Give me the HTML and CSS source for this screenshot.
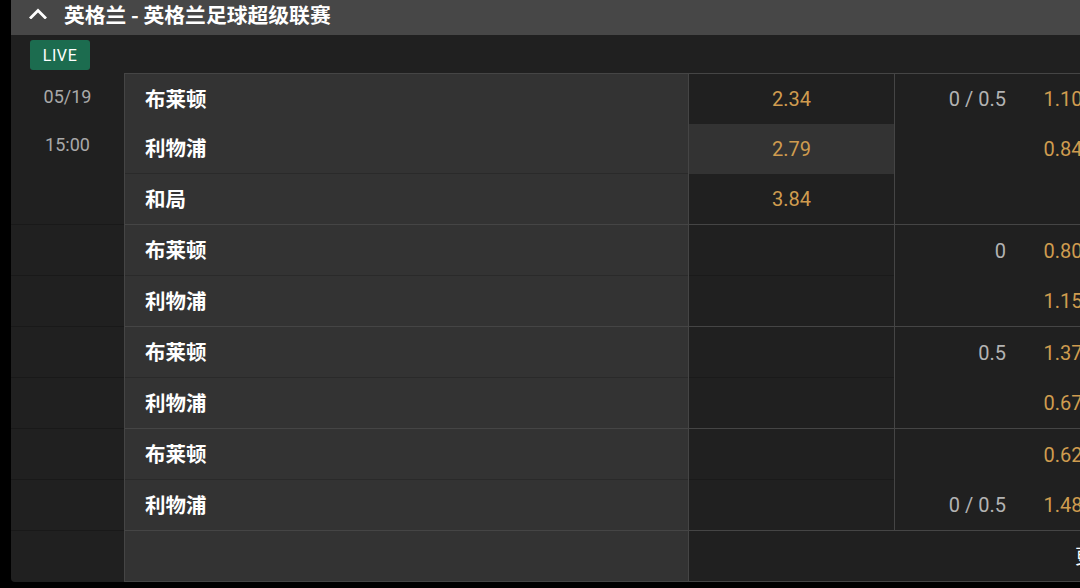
FILE: index.html
```html
<!DOCTYPE html>
<html lang="zh-CN">
<head>
<meta charset="utf-8">
<title>英格兰足球超级联赛</title>
<link rel="stylesheet" href="styles.css">
</head>
<body>
<div class="board">
  <div class="league-header">
    <svg class="chevron" width="18" height="11" viewBox="0 0 18 11">
      <polyline points="2,9.5 9,2.5 16,9.5" fill="none" stroke="#fff" stroke-width="2.8" stroke-linecap="square"/>
    </svg>
    <span class="league-title">英格兰 - 英格兰足球超级联赛</span>
  </div>
  <div class="live-bar"><span class="live">LIVE</span></div>

  <div class="market">
    <div class="group g1">
      <div class="date-col first">
        <div class="date-cell tall">
          <div class="date">05/19</div>
          <div class="time">15:00</div>
        </div>
      </div>
      <div class="teams">
        <div class="team">布莱顿</div>
        <div class="team sep">利物浦</div>
        <div class="team">和局</div>
      </div>
      <div class="prices">
        <div class="price">2.34</div>
        <div class="price active">2.79</div>
        <div class="price">3.84</div>
      </div>
      <div class="hdp">
        <div class="hdp-row"><span class="line">0 / 0.5</span><span class="odd">1.10</span></div>
        <div class="hdp-row"><span class="line"></span><span class="odd">0.84</span></div>
        <div class="hdp-row"><span class="line"></span><span class="odd"></span></div>
      </div>
    </div>

    <div class="group">
      <div class="date-col">
        <div class="date-cell sep"></div>
        <div class="date-cell"></div>
      </div>
      <div class="teams">
        <div class="team sep">布莱顿</div>
        <div class="team">利物浦</div>
      </div>
      <div class="prices">
        <div class="price sep"></div>
        <div class="price"></div>
      </div>
      <div class="hdp">
        <div class="hdp-row gap"><span class="line">0</span><span class="odd">0.80</span></div>
        <div class="hdp-row"><span class="line"></span><span class="odd">1.15</span></div>
      </div>
    </div>

    <div class="group">
      <div class="date-col">
        <div class="date-cell sep"></div>
        <div class="date-cell"></div>
      </div>
      <div class="teams">
        <div class="team sep">布莱顿</div>
        <div class="team">利物浦</div>
      </div>
      <div class="prices">
        <div class="price sep"></div>
        <div class="price"></div>
      </div>
      <div class="hdp">
        <div class="hdp-row gap"><span class="line">0.5</span><span class="odd">1.37</span></div>
        <div class="hdp-row"><span class="line"></span><span class="odd">0.67</span></div>
      </div>
    </div>

    <div class="group">
      <div class="date-col">
        <div class="date-cell sep"></div>
        <div class="date-cell"></div>
      </div>
      <div class="teams">
        <div class="team sep">布莱顿</div>
        <div class="team">利物浦</div>
      </div>
      <div class="prices">
        <div class="price sep"></div>
        <div class="price"></div>
      </div>
      <div class="hdp">
        <div class="hdp-row gap"><span class="line"></span><span class="odd">0.62</span></div>
        <div class="hdp-row"><span class="line">0 / 0.5</span><span class="odd">1.48</span></div>
      </div>
    </div>

    <div class="group last">
      <div class="date-col">
        <div class="date-cell"></div>
      </div>
      <div class="teams">
        <div class="team"></div>
      </div>
      <div class="more">更多盘口</div>
    </div>
  </div>
</div>
</body>
</html>
```

FILE: styles.css
```css
* { box-sizing: border-box; }

html, body {
  margin: 0;
  padding: 0;
  background: #000;
  overflow: hidden;
  height: 588px;
}

body {
  font-family: Roboto, "Noto Sans CJK SC", sans-serif;
  color: #fff;
}

.board {
  margin-left: 11px;
  width: 1120px;
  background: #202020;
  border-bottom-left-radius: 4px;
}

.league-header {
  height: 35px;
  background: #474747;
  display: flex;
  align-items: center;
  padding: 0 0 8px 18px;
  gap: 17px;
}

.chevron { display: block; flex: none; }

.league-title {
  font-family: "Noto Sans CJK SC", sans-serif;
  font-weight: 700;
  font-size: 20.8px;
  line-height: 28px;
  color: #fff;
}

.live-bar {
  height: 38px;
  padding: 5px 0 0 19px;
}

.live {
  display: inline-flex;
  align-items: center;
  justify-content: center;
  width: 60px;
  height: 30px;
  background: #1c6c4f;
  border-radius: 3px;
  font-size: 16px;
  letter-spacing: 0.6px;
  color: #fff;
}

.market { display: flex; flex-direction: column; }

.group {
  display: flex;
}

.date-col {
  width: 113px;
  flex: none;
  border-top: 1px solid #191919;
}
.date-col.first { border-top-color: #202020; }

.date-cell {
  height: 50px;
}
.date-cell.sep { height: 51px; border-bottom: 1px solid #191919; }
.date-cell.tall {
  height: 150px;
  padding-top: 11px;
  text-align: center;
  color: #a9a9a9;
  font-size: 18px;
  line-height: 24px;
}
.date-cell.tall .time { margin-top: 24px; }

.teams {
  width: 564px;
  flex: none;
  background: #333;
  border-left: 1px solid #454545;
  border-top: 1px solid #454545;
}

.team {
  height: 50px;
  padding: 0 0 3px 20px;
  display: flex;
  align-items: center;
  font-family: "Noto Sans CJK SC", sans-serif;
  font-weight: 700;
  font-size: 20.5px;
  color: #fff;
}
.team.sep { height: 51px; border-bottom: 1px solid #2a2a2a; }
.g1 .team.sep { height: 50px; }

.prices {
  width: 206px;
  flex: none;
  border-left: 1px solid #454545;
  border-top: 1px solid #454545;
}

.price {
  height: 50px;
  display: flex;
  align-items: center;
  justify-content: center;
  font-size: 20px;
  color: #cf9c4f;
}
.price.sep { height: 51px; border-bottom: 1px solid #1a1a1a; }
.price.active { background: #333; }

.hdp {
  flex: 1;
  border-left: 1px solid #454545;
  border-top: 1px solid #454545;
}

.hdp-row {
  height: 50px;
  display: flex;
  align-items: center;
  font-size: 20px;
  white-space: nowrap;
}
.hdp-row.gap { height: 51px; }

.line {
  width: 118px;
  flex: none;
  text-align: right;
  padding-right: 7px;
  color: #b3b3b3;
}

.odd {
  width: 100px;
  flex: none;
  text-align: center;
  color: #cf9c4f;
}

.group.last .teams { border-bottom: 1px solid #454545; }

.more {
  flex: 1;
  height: 52px;
  border-left: 1px solid #454545;
  border-top: 1px solid #454545;
  border-bottom: 1px solid #454545;
  display: flex;
  align-items: center;
  padding: 0 0 2px 386px;
  white-space: nowrap;
  font-family: "Noto Sans CJK SC", sans-serif;
  font-size: 20px;
  color: #fff;
}
```
